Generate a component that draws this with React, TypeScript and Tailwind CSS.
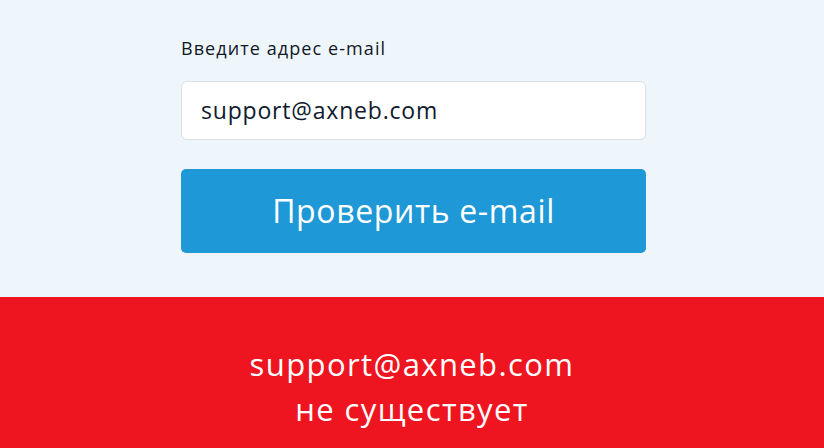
const FONT = "font-['Open_Sans','Noto_Sans',sans-serif]";

export default function App() {
  return (
    <div className={`w-[824px] h-[448px] flex flex-col ${FONT}`}>
      {/* email check form */}
      <div className="h-[297px] bg-[#eef6fc] pt-[35px] pl-[181px]">
        <label className="block text-[18px] leading-[26px] tracking-[0.06em] text-[#111827]">Введите адрес e-mail</label>
        <div className="mt-[20px] w-[465px] h-[59px] bg-white border border-[#dcdfe3] rounded-[6px] flex items-center px-[19px]">
          <span className="text-[23px] tracking-[0.035em] text-[#0f1a2e]">support@axneb.com</span>
        </div>
        <button className="mt-[29px] w-[465px] h-[84px] bg-[#1e98d6] rounded-[5px] text-white text-[32px] tracking-[0.02em] flex items-center justify-center">
          Проверить e-mail
        </button>
      </div>
      {/* result banner */}
      <div className="flex-1 bg-[#ee1520] flex flex-col items-center pt-[45px] text-white text-[31px] leading-[45px] tracking-[0.045em]">
        <span>support@axneb.com</span>
        <span>не существует</span>
      </div>
    </div>
  );
}
